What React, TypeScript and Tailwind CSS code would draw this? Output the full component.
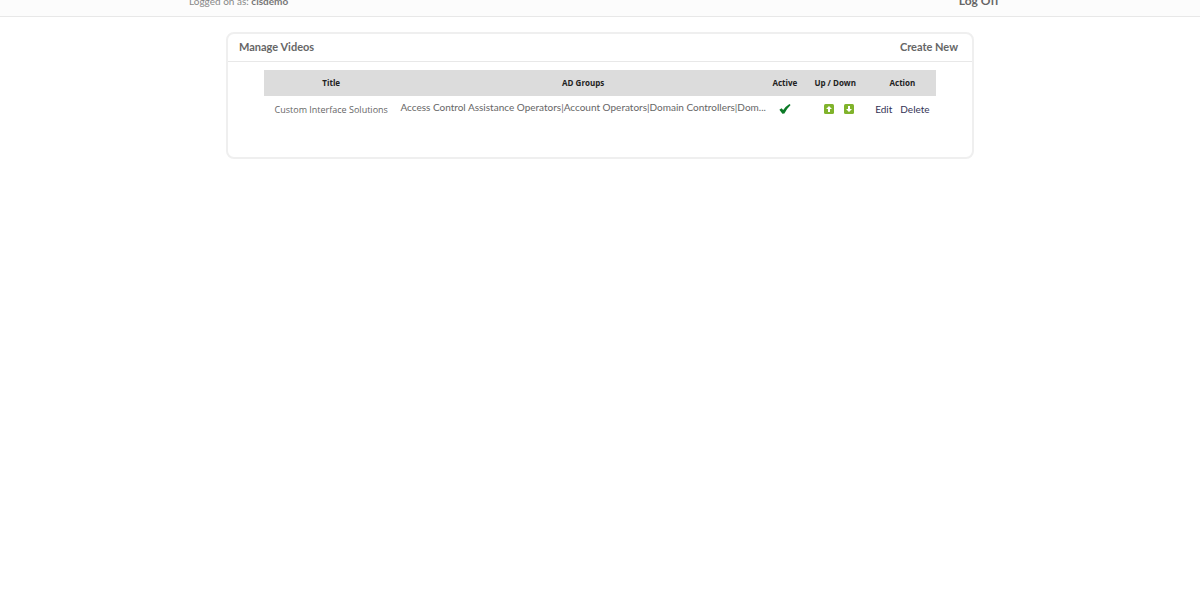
import React, { useState } from 'react';

interface Video {
  id: number;
  title: string;
  groups: string[];
  active: boolean;
}

const videos: Video[] = [
  {
    id: 1,
    title: 'Custom Interface Solutions',
    groups: [
      'Access Control Assistance Operators',
      'Account Operators',
      'Domain Controllers',
      'Dom...',
    ],
    active: true,
  },
];

const CheckIcon: React.FC = () => (
  <svg viewBox="0 0 12 12" className="w-3 h-3" role="img" aria-label="Active">
    <path
      d="M0.4 6.8 L2.6 5.2 L4.2 6.9 Q7 3.2 10.4 1 L11.6 2 Q8 5.5 5.4 10.4 L3.4 10.8 Z"
      fill="#0b7a26"
    />
  </svg>
);

const ArrowIcon: React.FC<{ down?: boolean }> = ({ down }) => (
  <svg viewBox="0 0 10 10" className="w-[10px] h-[10px]" aria-hidden="true">
    <rect width="10" height="10" rx="1.5" fill="#80b32b" />
    <path
      d={down ? 'M4 2h2v3h2L5 8 2 5h2z' : 'M4 8h2V5h2L5 2 2 5h2z'}
      fill="#ffffff"
    />
  </svg>
);

export default function App() {
  const [items] = useState(videos);

  return (
    <div className="font-[Lato,sans-serif] [font-variant-ligatures:none] text-[#666666]">
      {/* Top bar */}
      <header className="h-[17px] overflow-hidden bg-[#fcfcfc] border-b border-[#e8e8e8]">
        <div className="max-w-[822px] mx-auto pr-3 -mt-[7px] flex justify-between leading-4">
          <p className="text-[10px] text-[#888888]">
            Logged on as: <b className="text-[#777777]">cisdemo</b>
          </p>
          <a href="#logoff" className="text-xs leading-4 font-bold">
            Log Off
          </a>
        </div>
      </header>

      {/* Videos */}
      <main className="max-w-[748px] mx-auto mt-[15px] border-2 border-[#efefef] rounded-lg pb-[34px]">
        <div className="flex items-center justify-between h-7 px-[11px] pr-[14px] border-b border-[#e8e8e8]">
          <h1 className="text-[11px] font-bold">Manage Videos</h1>
          <a href="#create" className="text-[11px] font-bold">
            Create New
          </a>
        </div>

        <div className="px-9 pt-2">
          <table className="w-full table-fixed text-center text-[10px]">
            <thead className="font-['Open_Sans',sans-serif]">
              <tr className="h-[26px] bg-[#dcdcdc] text-[8px] text-[#222222]">
                <th className="w-[20%]">Title</th>
                <th className="w-[55%]">AD Groups</th>
                <th className="w-[5%]">Active</th>
                <th className="w-[10%]">Up / Down</th>
                <th className="w-[10%]">Action</th>
              </tr>
            </thead>
            <tbody>
              {items.map((video) => (
                <tr key={video.id} className="h-[27px]">
                  <td className="font-['Open_Sans',sans-serif] text-[9px] whitespace-nowrap">
                    {video.title}
                  </td>
                  <td className="px-[2px] pb-1 text-left truncate">
                    {video.groups.join('|')}
                  </td>
                  <td className="pb-[2px]">
                    {video.active && (
                      <div className="flex justify-center">
                        <CheckIcon />
                      </div>
                    )}
                  </td>
                  <td className="pb-[2px]">
                    <div className="flex justify-center gap-[10px] pl-2">
                      <button aria-label="Move up">
                        <ArrowIcon />
                      </button>
                      <button aria-label="Move down">
                        <ArrowIcon down />
                      </button>
                    </div>
                  </td>
                  <td className="text-[#333355] whitespace-nowrap">
                    <div className="flex justify-center gap-2">
                      <a href="#edit">Edit</a>
                      <a href="#delete">Delete</a>
                    </div>
                  </td>
                </tr>
              ))}
            </tbody>
          </table>
        </div>
      </main>
    </div>
  );
}
